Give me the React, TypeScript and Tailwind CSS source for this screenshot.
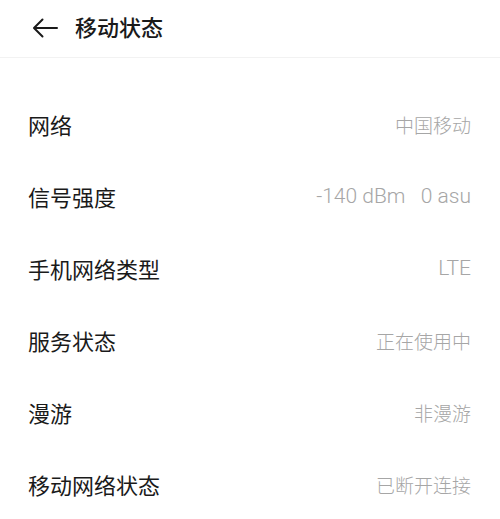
import React from "react";

const rows: { label: string; value: string; latin?: boolean }[] = [
  { label: "网络", value: "中国移动" },
  { label: "信号强度", value: "-140 dBm   0 asu", latin: true },
  { label: "手机网络类型", value: "LTE", latin: true },
  { label: "服务状态", value: "正在使用中" },
  { label: "漫游", value: "非漫游" },
  { label: "移动网络状态", value: "已断开连接" },
];

export default function App() {
  return (
    <div
      className="w-[500px] h-[519px] bg-white overflow-hidden"
      style={{ fontFamily: '"Noto Sans CJK SC", "Noto Sans", sans-serif' }}
    >
      <div className="h-[57px] flex items-center border-b border-[#f2f2f2] box-content">
        <div className="pl-[32px] pr-[17px] flex items-center -mt-[2px]">
          <svg width="26" height="20" viewBox="0 0 26 20" fill="none">
            <path
              d="M25 10H2.5M10.5 1.5L2 10l8.5 8.5"
              stroke="#1a1a1a"
              strokeWidth="2"
              strokeLinecap="round"
              strokeLinejoin="round"
            />
          </svg>
        </div>
        <div className="text-[22px] font-medium text-[#1a1a1a] -mt-[5px]">移动状态</div>
      </div>
      <div className="pt-[30px]">
        {rows.map((r) => (
          <div key={r.label} className="h-[72px] flex items-center justify-between pl-[28px] pr-[29px]">
            <span className="text-[22px] text-[#1a1a1a] leading-none">{r.label}</span>
            {r.latin ? (
              <span
                className="text-[21px] font-light text-[#a6a6a6] leading-none whitespace-pre"
                style={{ fontFamily: 'Roboto, "Noto Sans CJK SC", sans-serif' }}
              >
                {r.value}
              </span>
            ) : (
              <span className="text-[19px] font-light text-[#a6a6a6] leading-none">{r.value}</span>
            )}
          </div>
        ))}
      </div>
    </div>
  );
}
